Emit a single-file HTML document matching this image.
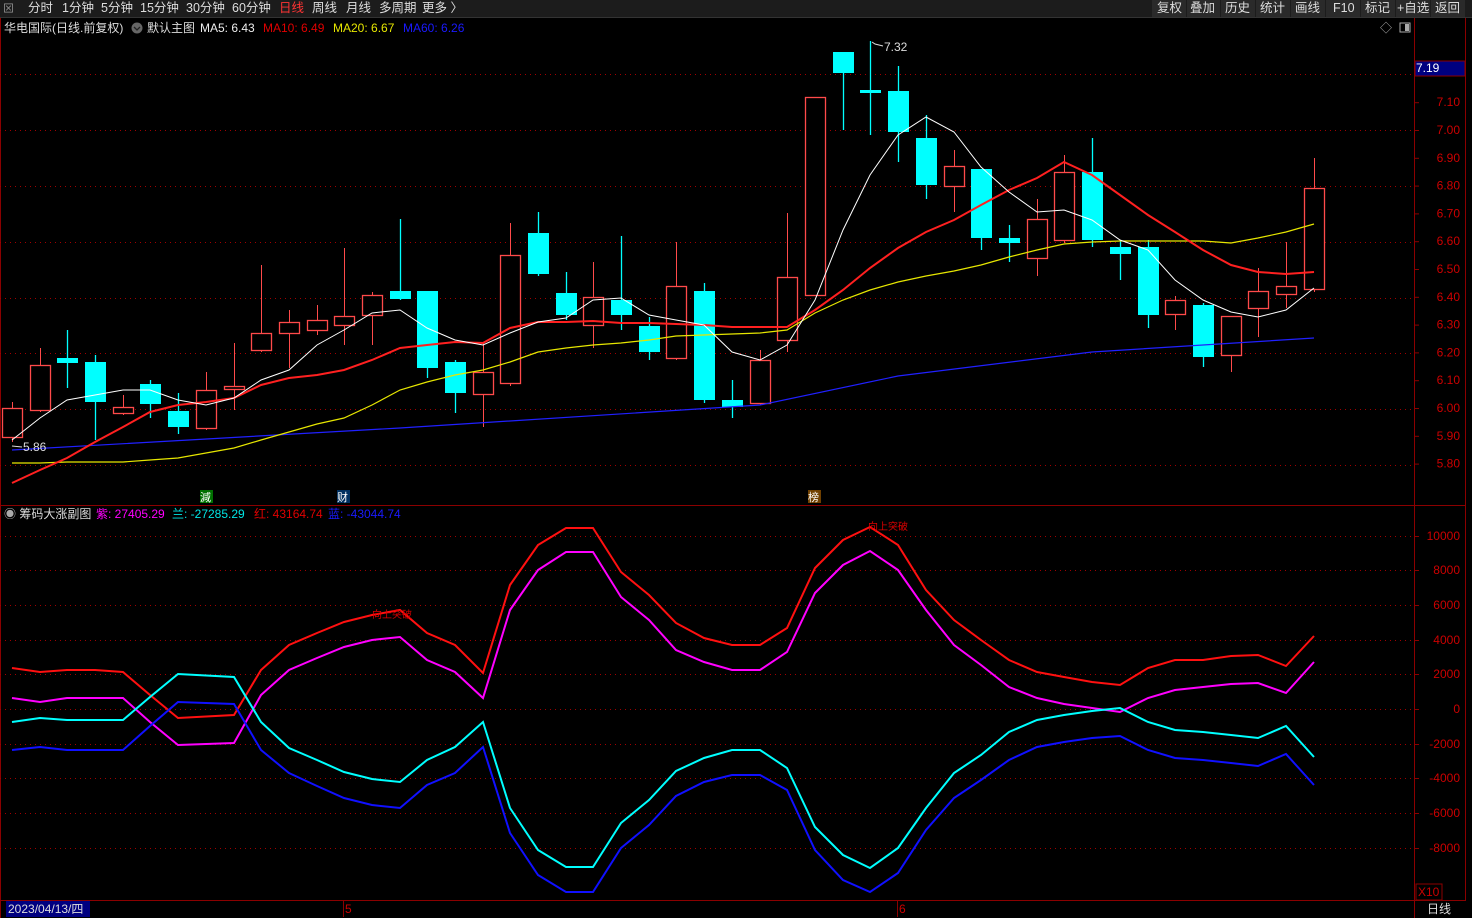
<!DOCTYPE html>
<html><head><meta charset="utf-8"><style>
html,body{margin:0;padding:0;background:#000;width:1472px;height:918px;overflow:hidden}
svg{display:block}
text{font-family:"Liberation Sans","Noto Sans CJK SC",sans-serif}
</style></head><body>
<svg id="s" width="1472" height="918" viewBox="0 0 1472 918" xmlns="http://www.w3.org/2000/svg">
<rect width="1472" height="918" fill="#000"/>
<!-- top toolbar -->
<rect x="0" y="0" width="1472" height="17" fill="#1c1c1c"/>
<g font-size="12.5" fill="#ddd">
<text x="3" y="12" font-size="11" fill="#999">⊠</text>
<text x="28" y="12">分时</text><text x="62" y="12">1分钟</text><text x="101" y="12">5分钟</text><text x="140" y="12">15分钟</text><text x="186" y="12">30分钟</text><text x="232" y="12">60分钟</text>
<text x="279" y="12" fill="#ff3333">日线</text><text x="312" y="12">周线</text><text x="346" y="12">月线</text><text x="379" y="12">多周期</text><text x="422" y="12">更多 〉</text>
</g>
<g fill="#2a2a2a"><rect x="1152" y="0" width="34" height="17"/><rect x="1187" y="0" width="33" height="17"/><rect x="1221" y="0" width="34" height="17"/><rect x="1256" y="0" width="34" height="17"/><rect x="1291" y="0" width="34" height="17"/><rect x="1326" y="0" width="34" height="17"/><rect x="1361" y="0" width="34" height="17"/><rect x="1396" y="0" width="34" height="17"/><rect x="1431" y="0" width="34" height="17"/></g>
<g font-size="12.5" fill="#ddd"><text x="1157" y="12">复权</text><text x="1190" y="12">叠加</text><text x="1225" y="12">历史</text><text x="1260" y="12">统计</text><text x="1295" y="12">画线</text><text x="1333" y="12">F10</text><text x="1365" y="12">标记</text><text x="1397" y="12">+自选</text><text x="1435" y="12">返回</text></g>
<rect x="0" y="17" width="1472" height="1" fill="#333"/>
<!-- frame -->
<g stroke="#8b0000" fill="none">
<line x1="1414.5" y1="18" x2="1414.5" y2="918"/>
<line x1="1465.5" y1="18" x2="1465.5" y2="900"/>
<line x1="0" y1="505.5" x2="1466" y2="505.5"/>
<line x1="0" y1="900.5" x2="1466" y2="900.5"/>
<line x1="0.5" y1="18" x2="0.5" y2="918"/>
</g>
<g id="grid" stroke="#a00000" stroke-dasharray="1,4"></g>
<!-- legend -->
<g font-size="12">
<text x="4" y="32" fill="#ddd">华电国际(日线.前复权)</text>
<circle cx="137" cy="28" r="5.5" fill="#666"/><path d="M134 27l3 3 3-3" stroke="#222" fill="none" stroke-width="1.3"/>
<text x="147" y="32" fill="#ddd">默认主图</text>
<text x="200" y="32" fill="#eee">MA5: 6.43</text>
<text x="263" y="32" fill="#e00000">MA10: 6.49</text>
<text x="333" y="32" fill="#e6e600">MA20: 6.67</text>
<text x="403" y="32" fill="#1a1aff">MA60: 6.26</text>
<text x="1380" y="32" fill="#aaa" font-size="12">◇</text>
<rect x="1400" y="23" width="10" height="9" fill="none" stroke="#aaa"/><rect x="1405" y="24" width="4" height="7" fill="#aaa"/>
<text x="4" y="518" fill="#ddd"><tspan fill="#aaa">◉</tspan> 筹码大涨副图</text>
<text x="96" y="518" fill="#ff00ff">紫: 27405.29</text>
<text x="172" y="518" fill="#00e5e5">兰: -27285.29</text>
<text x="254" y="518" fill="#e00000">红: 43164.74</text>
<text x="328" y="518" fill="#1a1aff">蓝: -43044.74</text>
</g>
<!-- price axis -->
<rect x="1415" y="61" width="50" height="15" fill="#000080" stroke="#8b0000"/>
<text x="1416" y="72" fill="#fff" font-size="12">7.19</text>
<g id="pax" font-size="12" fill="#cc0000" text-anchor="end"></g>
<g id="vax" font-size="12" fill="#cc0000" text-anchor="end"></g>
<rect x="1416" y="884" width="26" height="16" fill="none" stroke="#8b0000"/>
<text x="1418" y="896" fill="#cc0000" font-size="12">X10</text>
<text x="1427" y="913" fill="#ddd" font-size="12">日线</text>
<!-- bottom bar -->
<rect x="6" y="901" width="84" height="16" fill="#000080"/>
<text x="8" y="913" fill="#ddd" font-size="12">2023/04/13/四</text>
<line x1="343.5" y1="901" x2="343.5" y2="917" stroke="#8b0000"/><text x="345" y="913" fill="#cc0000" font-size="12">5</text>
<line x1="897.5" y1="901" x2="897.5" y2="917" stroke="#8b0000"/><text x="899" y="913" fill="#cc0000" font-size="12">6</text>
<g id="cd"></g>
<g id="ln" fill="none"></g>
<!-- markers -->
<rect x="200" y="490" width="13" height="13" fill="#007000"/><text x="200" y="501" font-size="11" fill="#fff">減</text>
<rect x="337" y="490" width="13" height="13" fill="#003060"/><text x="337" y="501" font-size="11" fill="#fff">财</text>
<rect x="808" y="490" width="13" height="13" fill="#704000"/><text x="808" y="501" font-size="11" fill="#fff">榜</text>
<text x="884" y="51" font-size="12" fill="#ddd">7.32</text><path d="M872 42l3 2 8 2" stroke="#ddd" fill="none"/>
<text x="23" y="451" font-size="12" fill="#ddd">5.86</text><path d="M12 446l10 1" stroke="#ddd" fill="none"/>
<text x="372" y="618" font-size="10" fill="#e00000">向上突破</text>
<text x="868" y="530" font-size="10" fill="#e00000">向上突破</text>
</svg>
<script>
const NS="http://www.w3.org/2000/svg";
function el(p,t,a){const e=document.createElementNS(NS,t);for(const k in a)e.setAttribute(k,a[k]);p.appendChild(e);return e;}
const g=document.getElementById('grid');
[74,130,186,242,298,353,409,465].forEach(y=>el(g,'line',{x1:0,x2:1414,y1:y+.5,y2:y+.5}));
for(let v=10000;v>=-8000;v-=2000){const y=Math.round(709-v*0.01735);el(g,'line',{x1:0,x2:1414,y1:y+.5,y2:y+.5});
 el(document.getElementById('vax'),'text',{x:1460,y:y+4}).textContent=v;el(document.getElementById('vax'),'line',{x1:1414,x2:1419,y1:y+.5,y2:y+.5,stroke:'#8b0000'});}
const pax=document.getElementById('pax');
for(let i=0;i<=13;i++){const p=7.10-i*0.1;const y=130+(7.00-p)*278;el(pax,'text',{x:1460,y:y+4}).textContent=p.toFixed(2);el(pax,'line',{x1:1414,x2:1419,y1:y+.5,y2:y+.5,stroke:'#8b0000'});}
const xs=[12,40,67,95,123,150,178,206,234,261,289,317,344,372,400,427,455,483,510,538,566,593,621,649,676,704,732,760,787,815,843,870,898,926,954,981,1009,1037,1064,1092,1120,1148,1175,1203,1231,1258,1286,1314];
const C=[[1,408,437,402,442],[1,365,410,348,412],[0,358,363,330,388],[0,362,402,355,440],[1,407,413,395,415],[0,384,404,380,418],[0,411,427,393,434],[1,390,428,372,430],[1,386,389,343,410],[1,333,350,265,352],[1,322,333,310,368],[1,320,330,305,335],[1,316,325,248,345],[1,295,315,292,345],[0,291,299,219,300],[0,291,368,291,378],[0,362,393,360,413],[1,372,394,342,427],[1,255,383,223,386],[0,233,274,212,276],[0,293,315,272,320],[1,297,325,262,348],[0,300,315,236,330],[0,326,352,317,360],[1,286,358,242,360],[0,291,400,283,403],[0,400,407,380,418],[1,360,403,350,405],[1,277,340,213,352],[1,97,295,97,295],[0,52,73,52,130],[0,90,93,41,135],[0,91,132,66,162],[0,138,185,115,199],[1,166,186,150,212],[0,169,238,169,250],[0,238,243,225,262],[1,219,258,199,276],[1,172,240,155,243],[0,172,240,138,247],[0,247,254,240,280],[0,247,315,240,328],[1,300,314,296,330],[0,305,357,303,367],[1,316,355,316,372],[1,291,308,268,337],[1,286,294,242,308],[1,188,289,158,292]];
const cd=document.getElementById('cd');
C.forEach((c,i)=>{const x=xs[i];if(c[0]){const col='#ff4a4a';
 el(cd,'line',{x1:x+.5,x2:x+.5,y1:c[3],y2:c[1],stroke:col});el(cd,'line',{x1:x+.5,x2:x+.5,y1:c[2],y2:c[4],stroke:col});
 el(cd,'rect',{x:x-9.5,y:c[1]+.5,width:20,height:Math.max(1,c[2]-c[1]),fill:'#000',stroke:col,'stroke-width':1.3});}
 else{const col='#00ffff';el(cd,'line',{x1:x+.5,x2:x+.5,y1:c[3],y2:c[4],stroke:col,'stroke-width':1.3});
 el(cd,'rect',{x:x-10,y:c[1],width:21,height:Math.max(3,c[2]-c[1]),fill:col});}});
const ln=document.getElementById('ln');
function pl(ys,col,w){el(ln,'polyline',{points:ys.map((y,i)=>xs[i]+','+y).join(' '),stroke:col,'stroke-width':w});}
function plp(pts,col,w){el(ln,'polyline',{points:pts.map(p=>p.join(',')).join(' '),stroke:col,'stroke-width':w});}
plp([[12,450],[400,428],[760,405],[898,376],[1092,352],[1314,338]],'#2020ff',1.2);
pl([463,463,462,462,462,460,458,453,448,440,432,424,418,405,390,382,375,370,362,352,348,345,343,340,336,335,334,333,330,313,300,290,282,276,271,265,257,250,244,242,241,241,241,241,243,238,232,224],'#e6e600',1.2);
pl([483,470,458,442,427,412,405,402,398,385,378,375,370,360,348,345,342,343,328,322,322,321,323,323,324,325,327,327,327,310,290,268,248,232,220,205,190,178,162,175,195,215,232,250,265,272,274,272],'#ff2020',2);
pl([440,418,400,395,390,390,400,405,398,380,370,345,330,313,310,328,340,345,333,322,318,300,298,315,320,325,352,360,345,300,230,175,135,117,132,167,192,212,210,220,240,250,280,300,312,317,310,288],'#fff',1);
const R=[668,672,670,670,672,695,718,715,670,645,633,622,615,610,633,645,673,585,545,528,528,572,595,623,638,645,645,628,568,540,527,545,590,620,640,660,672,677,682,685,668,660,660,656,655,666,636];
function p2(arr,col){const X=[12,40,67,95,123,150,178,234,261,289,317,344,372,400,427,455,483,510,538,566,593,621,649,676,704,732,760,787,815,843,870,898,926,954,981,1009,1037,1064,1092,1120,1148,1175,1203,1231,1258,1286,1314];
 el(ln,'polyline',{points:arr.map((y,i)=>X[i]+','+y).join(' '),stroke:col,'stroke-width':2});}
p2(R,'#ff1010');
p2([698,702,698,698,698,722,745,743,695,670,658,647,640,637,660,672,698,610,570,552,552,597,620,650,662,670,670,652,593,565,551,570,610,645,665,687,698,704,708,712,698,690,687,684,683,693,662],'#ff00ff');
p2([722,718,720,720,720,697,674,677,722,748,760,772,779,782,760,747,722,808,850,867,867,823,800,771,758,750,750,768,827,855,868,848,808,773,755,732,720,715,711,708,722,730,732,735,738,726,757],'#00ffff');
p2([750,747,750,750,750,726,702,704,750,773,786,798,805,808,785,773,747,833,875,892,892,848,825,796,782,775,775,790,850,880,892,873,830,798,780,760,747,742,738,736,750,758,760,763,766,754,785],'#1010ff');
</script>
</body></html>
